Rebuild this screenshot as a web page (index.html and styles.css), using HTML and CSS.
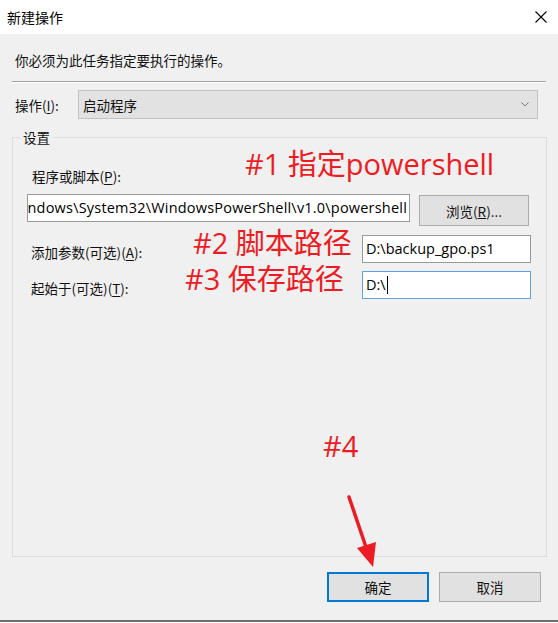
FILE: index.html
```html
<!DOCTYPE html>
<html lang="zh-CN">
<head>
<meta charset="utf-8">
<title>新建操作</title>
<link rel="stylesheet" href="styles.css">
</head>
<body>
<div class="dialog">
  <header class="titlebar">
    <span class="title">新建操作</span>
    <svg class="close" width="12" height="12" viewBox="0 0 12 12"><path d="M0.5 0.5 L11.5 11.5 M11.5 0.5 L0.5 11.5" stroke="#000" stroke-width="1.1" fill="none"/></svg>
  </header>
  <main class="content">
    <p class="intro">你必须为此任务指定要执行的操作。</p>
    <div class="sep"></div>
    <div class="action-row">
      <span class="label action-label">操作(<u>I</u>):</span>
      <div class="combo">
        <span class="combo-text">启动程序</span>
        <svg class="chevron" width="8" height="5" viewBox="0 0 8 5"><path d="M0.5 0.5 L4 4 L7.5 0.5" stroke="#777" stroke-width="1" fill="none"/></svg>
      </div>
    </div>
    <fieldset class="group">
      <legend class="legend">设置</legend>
      <div class="row row-prog-label">
        <span class="label prog-label">程序或脚本(<u>P</u>):</span>
        <span class="note note1">#1 指定powershell</span>
      </div>
      <div class="row row-prog">
        <div class="textbox textbox-prog"><span class="tb-text">ndows\System32\WindowsPowerShell\v1.0\powershell</span></div>
        <button class="btn btn-browse">浏览(<u>R</u>)...</button>
      </div>
      <div class="row row-args">
        <span class="label args-label">添加参数(可选)(<u>A</u>):</span>
        <span class="note note2">#2 脚本路径</span>
        <div class="textbox textbox-short"><span class="tb-text">D:\backup_gpo.ps1</span></div>
      </div>
      <div class="row row-start">
        <span class="label start-label">起始于(可选)(<u>T</u>):</span>
        <span class="note note3">#3 保存路径</span>
        <div class="textbox textbox-short focused"><span class="tb-text">D:\</span><span class="caret"></span></div>
      </div>
      <div class="filler">
        <span class="note note4">#4</span>
      </div>
    </fieldset>
    <div class="buttons">
      <button class="btn btn-ok">确定</button>
      <button class="btn btn-cancel">取消</button>
    </div>
  </main>
  <div class="taskedge"></div>
  <svg class="arrow" width="558" height="623" viewBox="0 0 558 623">
    <line x1="349" y1="497" x2="368" y2="553" stroke="#ed1c24" stroke-width="3.5" stroke-linecap="round"/>
    <polygon points="357,548 376,542 373,567" fill="#ed1c24"/>
  </svg>
</div>
</body>
</html>
```

FILE: styles.css
```css
* { box-sizing: border-box; }

html, body {
  margin: 0;
  padding: 0;
  background: #ffffff;
}

.dialog {
  position: relative;
  width: 558px;
  height: 623px;
  display: flex;
  flex-direction: column;
  overflow: hidden;
  font-family: "Noto Sans CJK SC", sans-serif;
  font-size: 13.5px;
  color: #111;
}

.titlebar {
  height: 34px;
  flex: none;
  background: #ffffff;
  display: flex;
  align-items: center;
  justify-content: space-between;
  padding: 0 11px 1px 7px;
}

.title {
  font-size: 14px;
  line-height: 20px;
  color: #000;
}

.close { display: block; }

.content {
  flex: none;
  background: #f0f0f0;
  display: flex;
  flex-direction: column;
  padding-bottom: 18px;
}

.intro {
  margin: 16px 0 0 15px;
  line-height: 20px;
}

.sep {
  margin: 11px 12px 0 12px;
  height: 2px;
  border-top: 1px solid #a0a0a0;
  border-bottom: 1px solid #ffffff;
}

.label {
  line-height: 20px;
  white-space: nowrap;
}

.label u { text-decoration-thickness: 1px; text-underline-offset: 2px; }

.action-row {
  margin-top: 7px;
  height: 29px;
  display: flex;
  align-items: center;
  padding-left: 15px;
}

.action-label { width: 63px; }

.combo {
  width: 460px;
  height: 29px;
  background: #e2e2e2;
  border: 1px solid #c2c2c2;
  display: flex;
  align-items: center;
  justify-content: space-between;
  padding: 0 8px 0 4px;
}

.combo-text { line-height: 20px; }

.chevron { display: block; }

.group {
  margin: 9px 11px 0 12px;
  padding: 0 15px 0 14px;
  height: 429px;
  border: 1px solid #dcdcdc;
  display: flex;
  flex-direction: column;
  min-width: 0;
}

.legend {
  padding: 0 3px;
  margin-left: -7px;
  line-height: 18px;
}

.row {
  display: flex;
  align-items: flex-start;
}

.note {
  font-family: "Open Sans", "Noto Sans CJK SC", sans-serif;
  font-size: 29px;
  line-height: 32px;
  color: #ed1c24;
  white-space: nowrap;
}

.row-prog-label { height: 40px; }

.prog-label {
  width: 218px;
  padding-left: 5px;
  margin-top: 20px;
}

.note1 { margin-top: 2px; }

.row-prog {
  margin-top: 8px;
  gap: 9px;
}

.textbox {
  height: 28px;
  background: #ffffff;
  border: 1px solid #9a9a9a;
  display: flex;
  align-items: center;
  overflow: hidden;
  white-space: nowrap;
  font-family: "Open Sans", sans-serif;
  font-size: 14.5px;
  color: #000;
}

.tb-text { line-height: 20px; }

.textbox-prog {
  width: 383px;
  justify-content: flex-end;
  padding-right: 2px;
  letter-spacing: 0.2px;
}

.textbox-short {
  width: 169px;
  padding-left: 3px;
}

.textbox.focused { border-color: #5ea4e4; }

.caret {
  display: inline-block;
  width: 1px;
  height: 18px;
  background: #000;
  margin-left: 1px;
}

.btn {
  height: 30px;
  background: #e1e1e1;
  border: 1px solid #adadad;
  font-family: "Noto Sans CJK SC", sans-serif;
  font-size: 13.5px;
  color: #111;
  padding: 0;
  display: flex;
  align-items: center;
  justify-content: center;
  line-height: 20px;
}

.btn-browse {
  width: 110px;
  height: 31px;
  margin-top: 1px;
}

.row-args { margin-top: 1px; }

.args-label {
  width: 166px;
  padding-left: 4px;
  margin-top: 15px;
}

.note2 { width: 169px; }

.row-args .textbox { margin-top: 8px; }

.row-start { margin-top: 0; }

.start-label {
  width: 158px;
  padding-left: 4px;
  margin-top: 15px;
}

.note3 { width: 177px; }

.row-start .textbox { margin-top: 8px; }

.filler {
  display: flex;
}

.note4 {
  margin-top: 131px;
  margin-left: 296px;
}

.buttons {
  margin-top: 15px;
  display: flex;
  justify-content: flex-end;
  gap: 10px;
  padding-right: 17px;
}

.buttons .btn { width: 102px; }

.btn-ok { border: 2px solid #0078d7; }

.taskedge {
  flex: 1;
  background: #ffffff;
  border-top: 2px solid #6e6e6e;
}

.arrow {
  position: absolute;
  left: 0;
  top: 0;
  pointer-events: none;
}
```
